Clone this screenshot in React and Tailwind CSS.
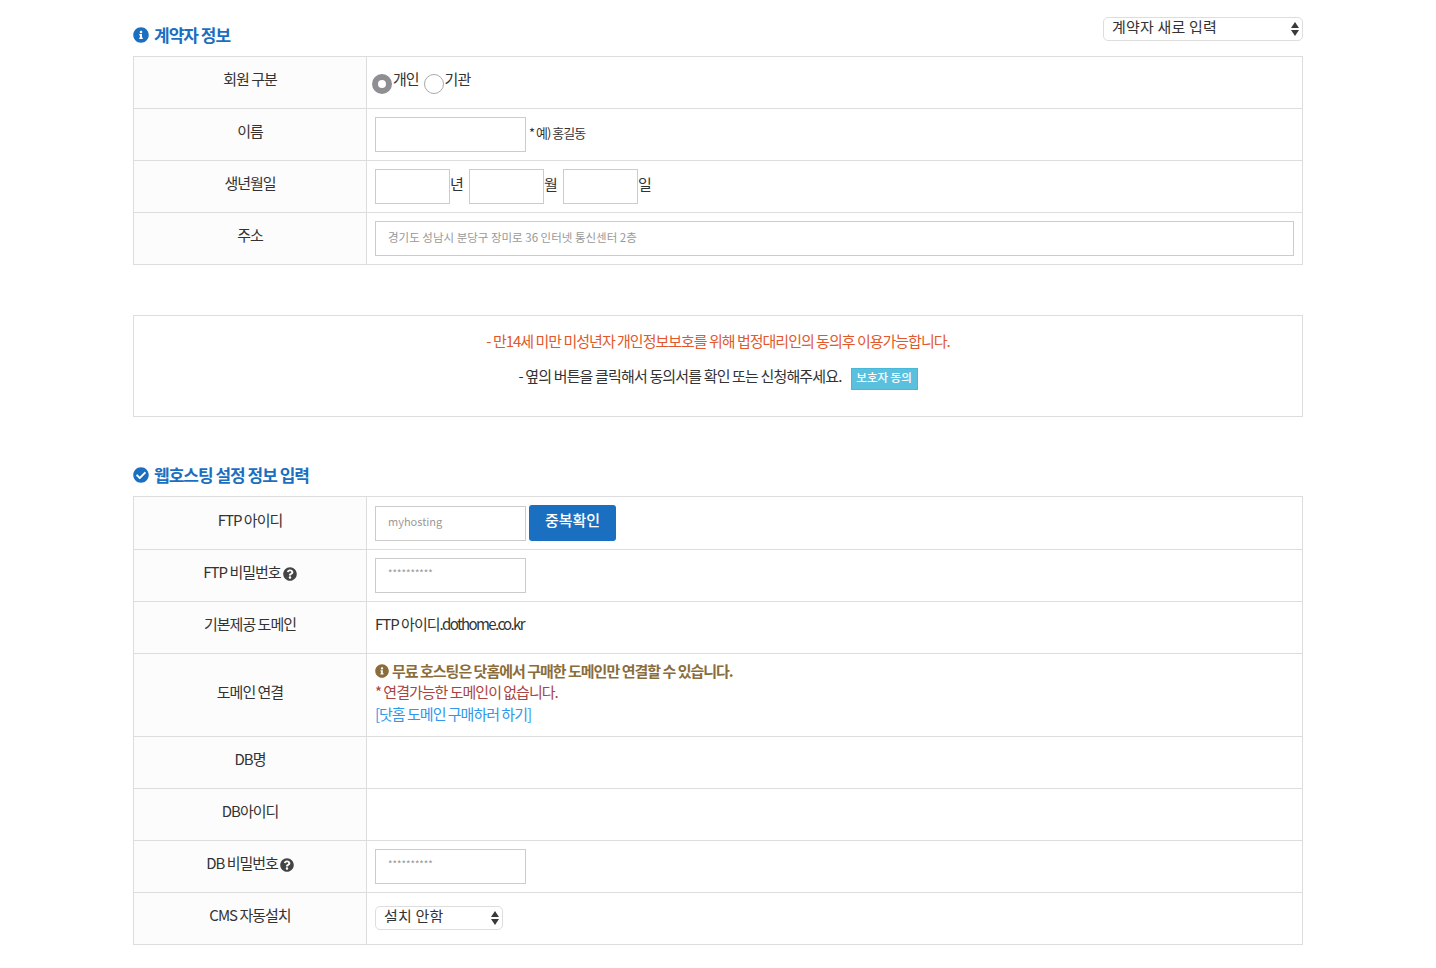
import React from 'react';
import {FaInfoCircle, FaCheckCircle, FaQuestionCircle} from "react-icons/fa";

const FONT = "font-['Noto_Sans_CJK_KR','Noto_Sans',sans-serif]";

function Arrows() {
    return (
        <svg className="absolute right-[3px] top-[4px] pointer-events-none" width="10" height="16" viewBox="0 0 10 16">
            <path d="M5 1 L9 7 L1 7 Z" fill="#3a3a3a"/>
            <path d="M5 15 L9 9 L1 9 Z" fill="#3a3a3a"/>
        </svg>
    );
}

function SelectBox({width, label}) {
    return (
        <div className={`relative ${width} h-[24px]`}>
            <select className="block w-full h-[24px] appearance-none bg-white border border-[#ddd] rounded-[5px] pl-2 pb-[6px] text-[15px] tracking-[0.2px] leading-[18px] text-[#333] outline-none">
                <option>{label}</option>
            </select>
            <Arrows/>
        </div>
    );
}

function TextInput({width, placeholder, size = 'text-[11.5px] pb-[3px]'}) {
    return (
        <input
            type="text"
            placeholder={placeholder}
            className={`${width} h-[35px] border border-[#ccc] bg-white px-3 tracking-[0px] outline-none placeholder:text-[#999] ${size}`}
        />
    );
}

function Row({label, help, children, height = 'h-[52px]'}) {
    return (
        <tr className={height}>
            <th className="w-[233px] bg-[#fcfcfc] border border-[#ddd] font-normal text-[15px] text-[#333] text-center align-middle pb-[6px]">
                <span className="inline-flex items-center gap-[2px]">
                    {label}
                    {help && <FaQuestionCircle className="text-[#444] mt-[2px]" size={14}/>}
                </span>
            </th>
            <td className="border border-[#ddd] px-2 align-middle text-[15px] text-[#333]">
                {children}
            </td>
        </tr>
    );
}

export default function App() {
    return (
        <main className={`w-[1170px] mx-auto tracking-[-1px] text-[#333] bg-white ${FONT}`}>
            <div className="flex justify-between h-[56px]">
                <h2 className="flex items-center gap-[5px] pt-[13px] text-[#1a6fc0] font-bold text-[17px] tracking-[-1px]">
                    <FaInfoCircle size={16}/>계약자 정보
                </h2>
                <div className="pt-[17px]">
                    <SelectBox width="w-[200px]" label="계약자 새로 입력"/>
                </div>
            </div>

            <table className="w-full border-collapse">
                <tbody>
                <Row label="회원 구분">
                    <div className="flex items-center -ml-[3px] pb-[4px]">
                        <span className="w-[20px] h-[20px] mt-[7px] rounded-full border-[6px] border-[#8e8e93] bg-white"></span>
                        <span className="ml-[1px] mr-[5px] pb-[2px]">개인</span>
                        <span className="w-[20px] h-[20px] mt-[7px] rounded-full border border-[#aaa] bg-white"></span>
                        <span className="ml-[1px] pb-[2px]">기관</span>
                    </div>
                </Row>
                <Row label="이름">
                    <div className="flex items-center gap-[3px]">
                        <TextInput width="w-[151px]"/>
                        <span className="text-[13px] pb-[3px]">* 예) 홍길동</span>
                    </div>
                </Row>
                <Row label="생년월일">
                    <div className="flex items-center">
                        <TextInput width="w-[75px]"/>
                        <span className="w-[19px] pb-[5px]">년</span>
                        <TextInput width="w-[75px]"/>
                        <span className="w-[19px] pb-[5px]">월</span>
                        <TextInput width="w-[75px]"/>
                        <span className="pb-[5px]">일</span>
                    </div>
                </Row>
                <Row label="주소">
                    <TextInput width="w-full block" placeholder="경기도 성남시 분당구 장미로 36 인터넷 통신센터 2층"/>
                </Row>
                </tbody>
            </table>

            <div className="mt-[50px] h-[102px] border border-[#ddd] flex flex-col items-center pt-[14px] text-[15px]">
                <p className="text-[#e2582c] h-[34px]">- 만14세 미만 미성년자 개인정보보호를 위해 법정대리인의 동의후 이용가능합니다.</p>
                <p className="flex items-center text-[#333] tracking-[-0.85px]">
                    <span className="pb-[2px]">- 옆의 버튼을 클릭해서 동의서를 확인 또는 신청해주세요.</span>
                    <button className="ml-[9px] mt-[4px] w-[67px] h-[22px] bg-[#5bc0de] border border-[#46b8da] text-white font-medium text-[11.5px] tracking-[0px] pb-[3px]">보호자 동의</button>
                </p>
            </div>

            <h2 className="flex items-center gap-[5px] h-[79px] pt-[36px] text-[#1a6fc0] font-bold text-[17px] tracking-[-1px]">
                <FaCheckCircle size={16}/>웹호스팅 설정 정보 입력
            </h2>

            <table className="w-full border-collapse">
                <tbody>
                <Row label="FTP 아이디" height="h-[53px]">
                    <div className="flex items-center gap-[3px]">
                        <TextInput width="w-[151px]" placeholder="myhosting" size="text-[11px] pb-[5px]"/>
                        <button className="w-[87px] h-[36px] rounded-[3px] bg-[#1a6fc0] text-white font-medium text-[15px] tracking-[0px] pb-[5px]">중복확인</button>
                    </div>
                </Row>
                <Row label="FTP 비밀번호" help>
                    <TextInput width="w-[151px] block" placeholder="**********" size="text-[9.6px] pb-[5px]"/>
                </Row>
                <Row label="기본제공 도메인">
                    <span className="block pb-[6px]">FTP 아이디<span className="tracking-[-1.6px]">.dothome.co.kr</span></span>
                </Row>
                <Row label="도메인 연결" height="h-[83px]">
                    <div className="leading-[21.5px] pb-[6px]">
                        <p className="flex items-center gap-[3px] font-bold text-[#8a6d3b] tracking-[-1px]"><FaInfoCircle size={14}/>무료 호스팅은 닷홈에서 구매한 도메인만 연결할 수 있습니다.</p>
                        <p className="text-[#a94442]">* 연결가능한 도메인이 없습니다.</p>
                        <a className="text-[#2f97ec]">[닷홈 도메인 구매하러 하기]</a>
                    </div>
                </Row>
                <Row label="DB명"/>
                <Row label="DB아이디"/>
                <Row label="DB 비밀번호" help>
                    <TextInput width="w-[151px] block" placeholder="**********" size="text-[9.6px] pb-[5px]"/>
                </Row>
                <Row label="CMS 자동설치">
                    <div className="pb-[1px]">
                        <SelectBox width="w-[128px]" label="설치 안함"/>
                    </div>
                </Row>
                </tbody>
            </table>
        </main>
    );
}
